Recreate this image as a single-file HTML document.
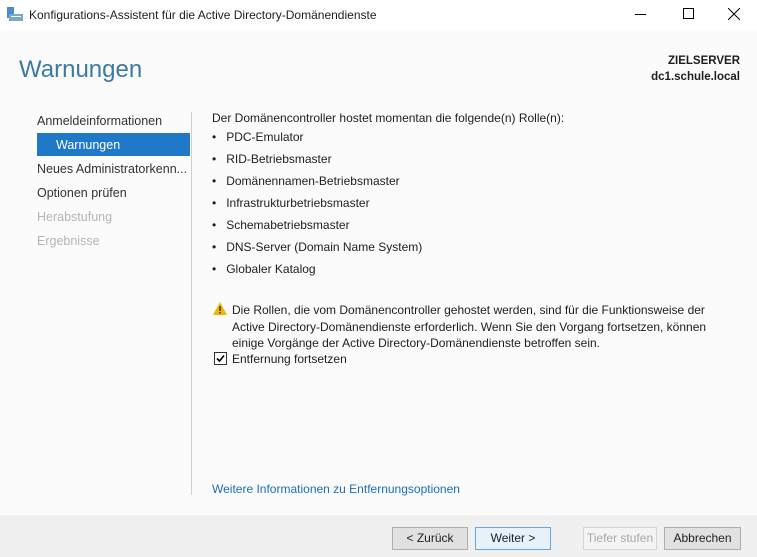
<!DOCTYPE html>
<html><head><meta charset="utf-8"><style>
*{margin:0;padding:0;box-sizing:border-box}
body{width:757px;height:557px;overflow:hidden;background:#fbfbfb;font-family:"Liberation Sans",sans-serif;font-size:12px;color:#1e1e1e;position:relative}
.a{position:absolute;white-space:nowrap}
.title{left:0;top:0;width:757px;height:30px;background:#fff}
.nav{font-size:12.5px;color:#333}
.dis{color:#b5b5b5}
.li{left:212px;font-size:12px}
.btn{position:absolute;top:527px;height:23px;border:1px solid #adadad;background:#e1e1e1;text-align:center;line-height:21px;font-size:12px}
</style></head><body>
<div class="a title"></div>
<svg class="a" style="left:6px;top:6px" width="18" height="16"><rect x="1" y="1" width="7" height="11" fill="#4a8cc8"/><rect x="3" y="8" width="14" height="7" fill="#7aa7d0"/><rect x="5" y="10" width="10" height="1" fill="#fff"/></svg>
<div class="a" style="left:29px;top:8px;font-size:12px">Konfigurations-Assistent für die Active Directory-Domänendienste</div>
<div class="a" style="left:635px;top:14px;width:11px;height:1px;background:#000"></div>
<div class="a" style="left:683px;top:8px;width:11px;height:11px;border:1px solid #000"></div>
<svg class="a" style="left:728px;top:8px" width="12" height="12"><path d="M0 0L12 12M12 0L0 12" stroke="#000" stroke-width="1"/></svg>
<div class="a" style="left:19px;top:56px;font-size:24px;color:#3b7aa2">Warnungen</div>
<div class="a" style="right:17px;top:53px;font-size:11.5px;font-weight:bold;text-align:right;line-height:16px">ZIELSERVER<br>dc1.schule.local</div>
<div class="a nav" style="left:37px;top:114px">Anmeldeinformationen</div>
<div class="a" style="left:37px;top:133px;width:153px;height:23px;background:#1f78c8"></div>
<div class="a nav" style="left:56px;top:138px;color:#fff">Warnungen</div>
<div class="a nav" style="left:37px;top:162px">Neues Administratorkenn...</div>
<div class="a nav" style="left:37px;top:186px">Optionen prüfen</div>
<div class="a nav dis" style="left:37px;top:210px">Herabstufung</div>
<div class="a nav dis" style="left:37px;top:234px">Ergebnisse</div>
<div class="a" style="left:191px;top:112px;width:1px;height:383px;background:#d0d0d0"></div>
<div class="a li" style="top:111px">Der Domänencontroller hostet momentan die folgende(n) Rolle(n):</div>
<div class="a li" style="top:130px">•&nbsp;&nbsp; PDC-Emulator</div>
<div class="a li" style="top:152px">•&nbsp;&nbsp; RID-Betriebsmaster</div>
<div class="a li" style="top:174px">•&nbsp;&nbsp; Domänennamen-Betriebsmaster</div>
<div class="a li" style="top:196px">•&nbsp;&nbsp; Infrastrukturbetriebsmaster</div>
<div class="a li" style="top:218px">•&nbsp;&nbsp; Schemabetriebsmaster</div>
<div class="a li" style="top:240px">•&nbsp;&nbsp; DNS-Server (Domain Name System)</div>
<div class="a li" style="top:262px">•&nbsp;&nbsp; Globaler Katalog</div>
<svg class="a" style="left:212px;top:301px" width="16" height="15"><path d="M8 1L15 14H1Z" fill="#f2b600"/><rect x="7.3" y="5" width="1.5" height="5" fill="#333"/><rect x="7.3" y="11" width="1.5" height="1.5" fill="#333"/></svg>
<div class="a" style="left:232px;top:302px;line-height:16.5px">Die Rollen, die vom Domänencontroller gehostet werden, sind für die Funktionsweise der<br>Active Directory-Domänendienste erforderlich. Wenn Sie den Vorgang fortsetzen, können<br>einige Vorgänge der Active Directory-Domänendienste betroffen sein.</div>
<div class="a" style="left:214px;top:352px;width:13px;height:13px;border:1px solid #333;background:#fff"></div>
<svg class="a" style="left:215px;top:353px" width="11" height="11"><path d="M2 5.5L4.5 8L9 2.5" fill="none" stroke="#000" stroke-width="1.6"/></svg>
<div class="a" style="left:232px;top:352px">Entfernung fortsetzen</div>
<div class="a" style="left:212px;top:482px;color:#1a6fb8">Weitere Informationen zu Entfernungsoptionen</div>
<div class="a" style="left:0;top:515px;width:757px;height:42px;background:#f0f0f0"></div>
<div class="btn" style="left:392px;width:76px">&lt; Zurück</div>
<div class="btn" style="left:475px;width:76px;border-color:#6fa6d8;background:#e5f1fb">Weiter &gt;</div>
<div class="btn" style="left:583px;width:74px;border-color:#d5d5d5;background:#f4f4f4;color:#a8a8a8">Tiefer stufen</div>
<div class="btn" style="left:664px;width:77px">Abbrechen</div>
</body></html>
